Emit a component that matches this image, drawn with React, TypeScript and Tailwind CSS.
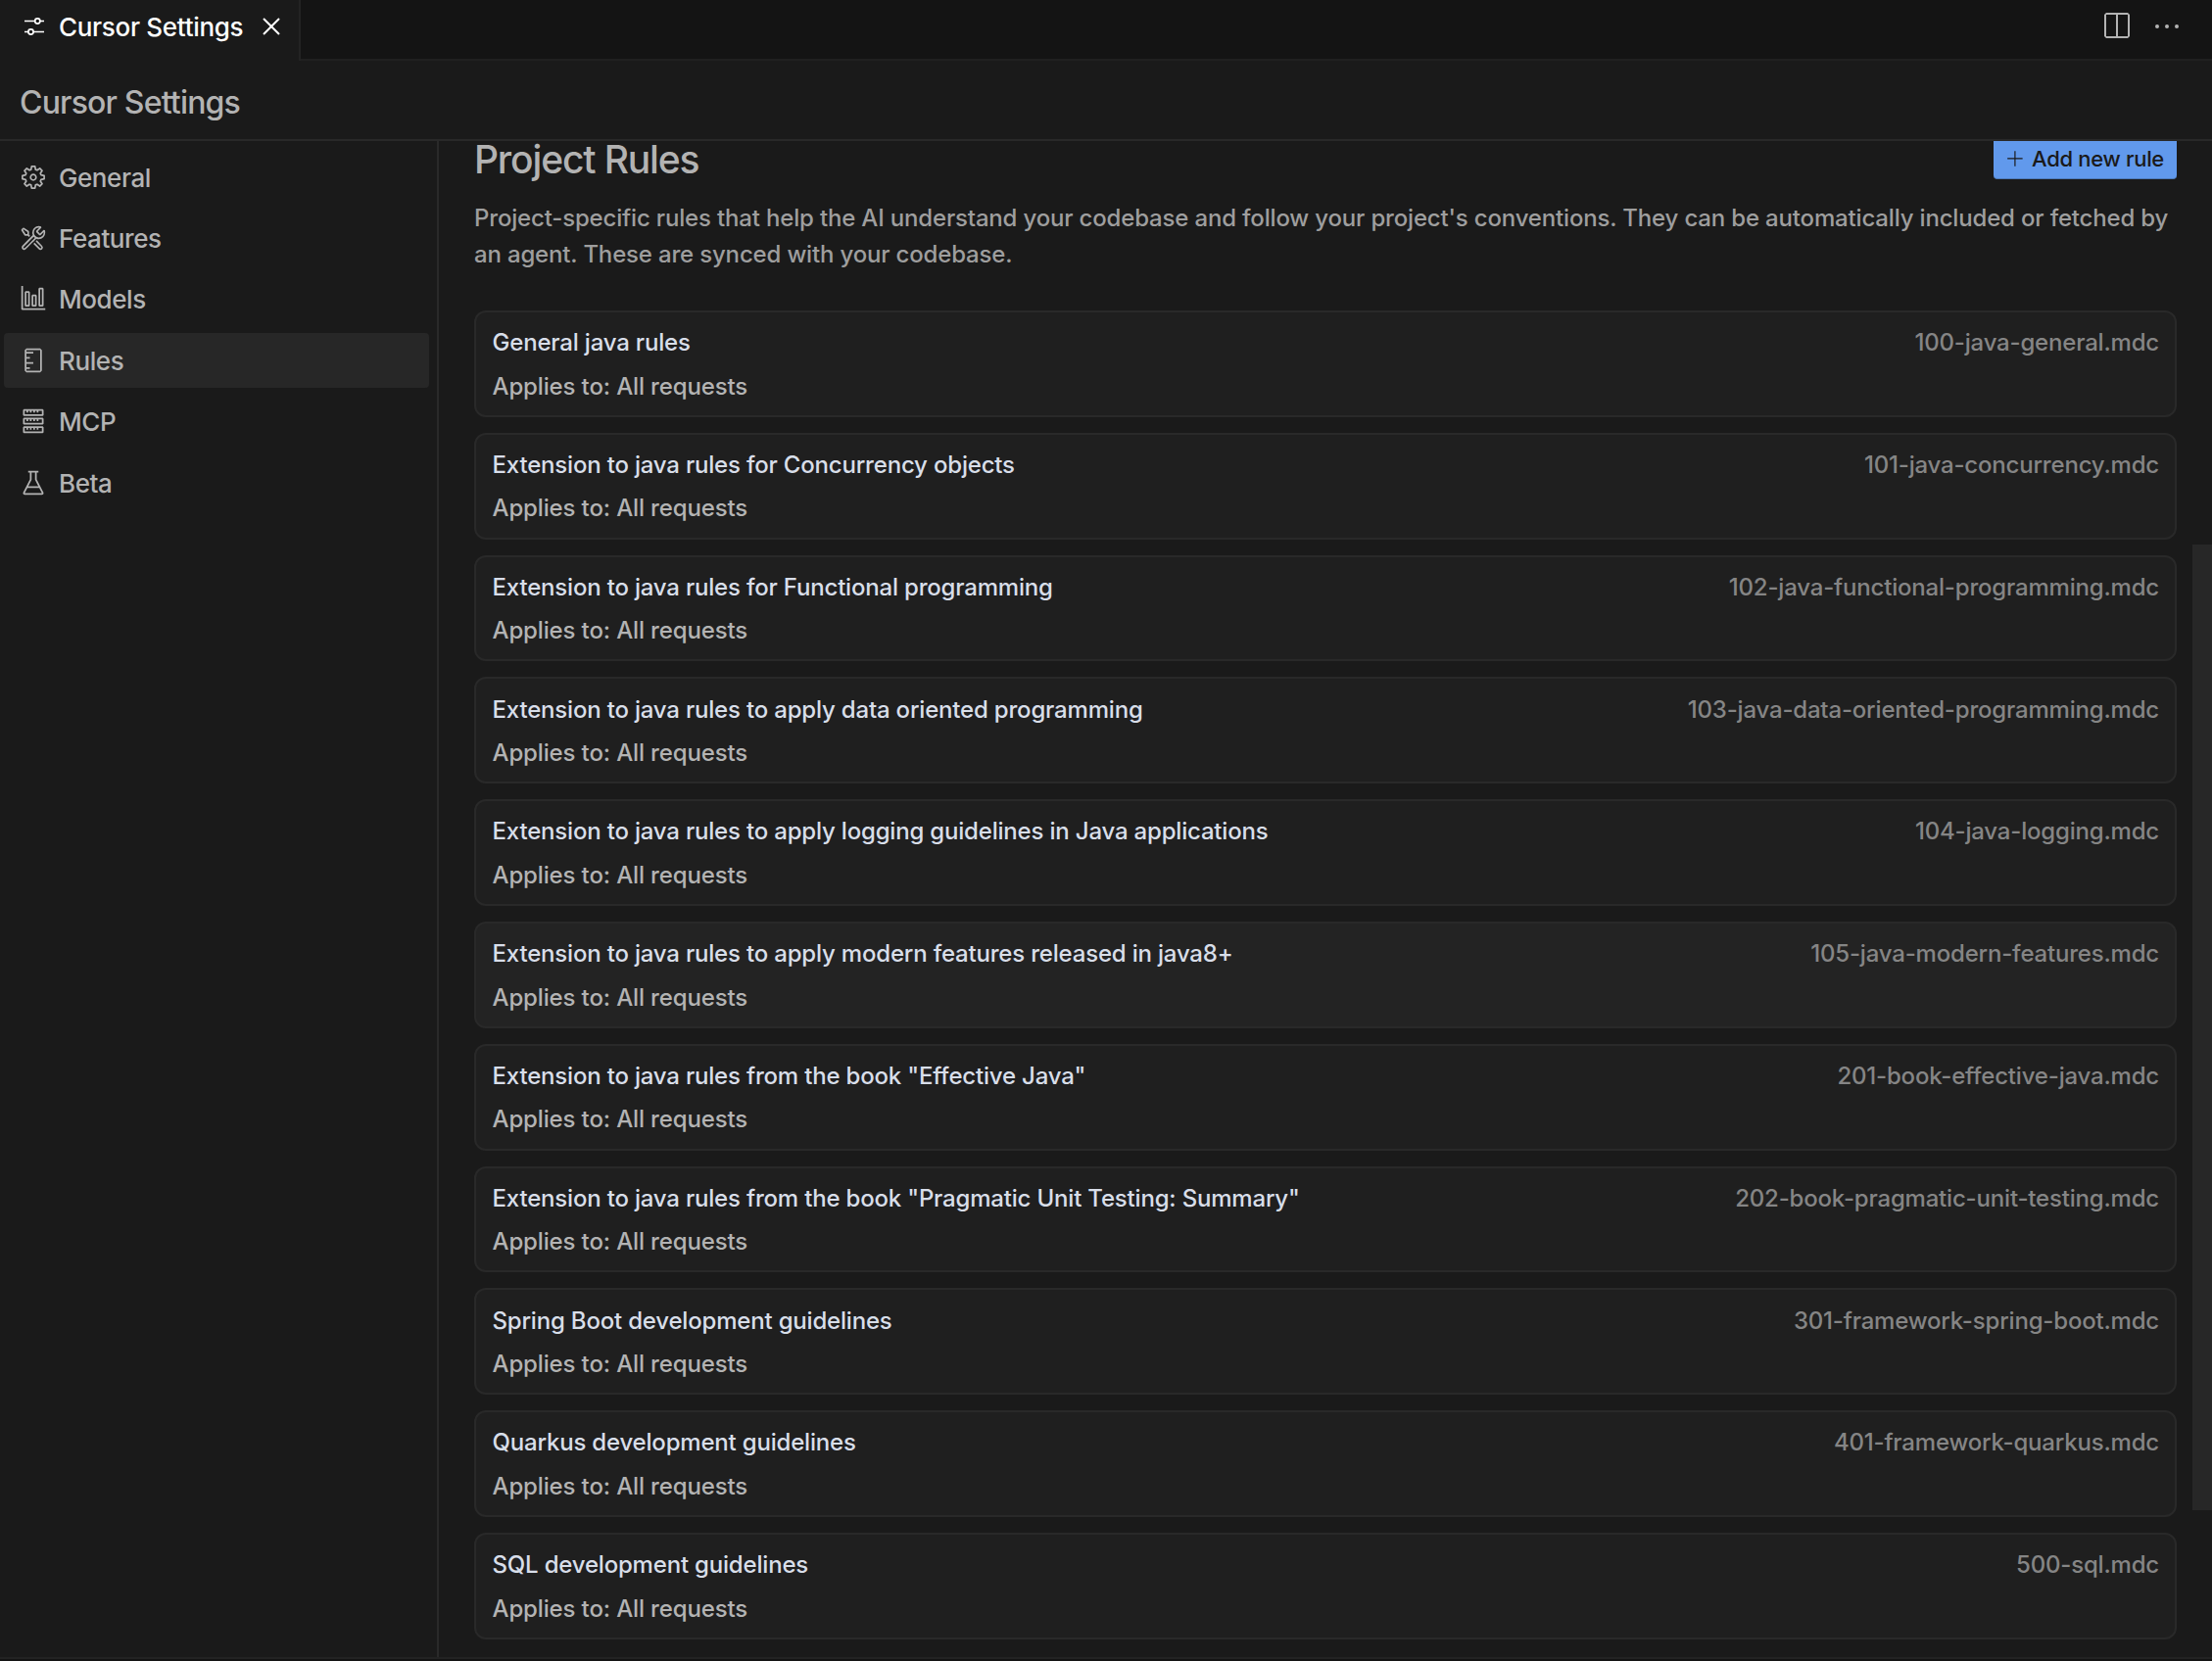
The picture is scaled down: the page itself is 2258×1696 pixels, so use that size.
import React from "react";
import {
  VscAdd,
  VscBeaker,
  VscClose,
  VscEllipsis,
  VscGraph,
  VscServer,
  VscSplitHorizontal,
  VscSymbolRuler,
  VscTools,
} from "react-icons/vsc";

function GearIcon({ className }: { className?: string }) {
  return (
    <svg viewBox="-14 -14 28 28" fill="none" stroke="currentColor" strokeWidth="1.7" strokeLinejoin="round" className={className}>
      <path d="M-2.3-7.9L-1.7-11.1L1.7-11.1L2.3-7.9L3.96-7.21L6.65-9.05L9.05-6.65L7.21-3.96L7.9-2.3L11.1-1.7L11.1 1.7L7.9 2.3L7.21 3.96L9.05 6.65L6.65 9.05L3.96 7.21L2.3 7.9L1.7 11.1L-1.7 11.1L-2.3 7.9L-3.96 7.21L-6.65 9.05L-9.05 6.65L-7.21 3.96L-7.9 2.3L-11.1 1.7L-11.1-1.7L-7.9-2.3L-7.21-3.96L-9.05-6.65L-6.65-9.05L-3.96-7.21Z" />
      <circle r="2.8" />
    </svg>
  );
}

const navItems = [
  { label: "General", Icon: GearIcon },
  { label: "Features", Icon: VscTools },
  { label: "Models", Icon: VscGraph },
  { label: "Rules", Icon: VscSymbolRuler, active: true },
  { label: "MCP", Icon: VscServer },
  { label: "Beta", Icon: VscBeaker },
];

const rules = [
  { title: "General java rules", file: "100-java-general.mdc" },
  { title: "Extension to java rules for Concurrency objects", file: "101-java-concurrency.mdc" },
  { title: "Extension to java rules for Functional programming", file: "102-java-functional-programming.mdc" },
  { title: "Extension to java rules to apply data oriented programming", file: "103-java-data-oriented-programming.mdc" },
  { title: "Extension to java rules to apply logging guidelines in Java applications", file: "104-java-logging.mdc" },
  { title: "Extension to java rules to apply modern features released in java8+", file: "105-java-modern-features.mdc", hovered: true },
  { title: 'Extension to java rules from the book "Effective Java"', file: "201-book-effective-java.mdc" },
  { title: 'Extension to java rules from the book "Pragmatic Unit Testing: Summary"', file: "202-book-pragmatic-unit-testing.mdc" },
  { title: "Spring Boot development guidelines", file: "301-framework-spring-boot.mdc" },
  { title: "Quarkus development guidelines", file: "401-framework-quarkus.mdc" },
  { title: "SQL development guidelines", file: "500-sql.mdc" },
];

function SlidersIcon({ className }: { className?: string }) {
  return (
    <svg viewBox="0 0 20 18" fill="none" stroke="currentColor" strokeWidth="1.7" className={className}>
      <path d="M0 3.5h10.6M16 3.5h4M0 14.5h3.8M9.2 14.5H20" />
      <circle cx="13.3" cy="3.5" r="2.6" />
      <circle cx="6.5" cy="14.5" r="2.6" />
    </svg>
  );
}

function TabBar() {
  return (
    <div className="flex h-[62px] shrink-0 bg-[#141414]">
      <div className="flex w-[307px] items-start border-r-2 border-[#232323] bg-[#1a1a1a] pl-[25px]">
        <SlidersIcon className="mt-[18px] h-[18px] w-5 text-white" />
        <span className="ml-[15px] mt-[8px] w-[188px] whitespace-nowrap text-[26px] leading-10 tracking-[-0.3px] text-white">
          Cursor Settings
        </span>
        <VscClose className="ml-[13px] mt-[11px] size-8 text-white" />
      </div>
      <div className="flex flex-1 items-start justify-end border-b-2 border-[#202020] pr-[30px]">
        <VscSplitHorizontal className="mt-[11px] size-8 text-[#b3b3b3]" />
        <VscEllipsis className="ml-5 mt-[11px] size-8 text-[#b3b3b3]" />
      </div>
    </div>
  );
}

function Sidebar() {
  return (
    <nav className="flex w-[448px] shrink-0 flex-col gap-[6.4px] border-r-2 border-[#292929] pl-1 pr-2 pt-[8.8px]">
      {navItems.map(({ label, Icon, active }) => (
        <div
          key={label}
          className={`flex h-14 items-center rounded pl-4 text-[26px] tracking-[-0.42px] text-[#b3b3b3] ${active ? "bg-[#272727]" : ""}`}
        >
          <Icon className="size-7" />
          <span className="ml-3 mt-[0.6px]">{label}</span>
        </div>
      ))}
    </nav>
  );
}

function RuleCard({ title, file, hovered }: { title: string; file: string; hovered?: boolean }) {
  return (
    <div
      className={`flex h-[108.8px] shrink-0 flex-col gap-[8.4px] rounded-xl border-2 border-[#292929] pl-[16.5px] pr-4 pt-[13.2px] text-[24px] leading-9 ${hovered ? "bg-[#232323]" : "bg-[#1f1f1f]"}`}
    >
      <div className="flex justify-between">
        <span className="tracking-[-0.19px] text-[#d8dee9]">{title}</span>
        <span className="tracking-[-0.19px] text-[#858585]">{file}</span>
      </div>
      <div className="tracking-[-0.14px] text-[#b3b3b3]">Applies to: All requests</div>
    </div>
  );
}

export default function App() {
  return (
    <div className="flex h-[1696px] w-[2258px] flex-col overflow-hidden bg-[#1a1a1a] font-['Inter',sans-serif] font-[450]">
      <TabBar />
      <header className="h-[82px] shrink-0 border-b-2 border-[#292929] pl-5 pt-[22px] text-[32px] leading-[42px] tracking-[-0.82px] text-[#b3b3b3]">
        Cursor Settings
      </header>
      <div className="flex min-h-0 flex-1">
        <Sidebar />
        <main className="flex min-w-0 flex-1 flex-col pl-9">
          <div className="flex h-[39px] shrink-0 items-start justify-between pr-4">
            <h1 className="text-[39px] leading-[38px] tracking-[-1.15px] text-[#b3b3b3]">Project Rules</h1>
            <button className="flex h-[39px] w-[187px] items-center rounded-b border-b border-[#4d7ab8] bg-[#6199ec] pb-px pl-[13px] text-[22px] tracking-[-0.3px] text-[#1a1a1a]">
              <VscAdd className="size-[19px] shrink-0" />
              <span className="mb-px ml-[7px] whitespace-nowrap">Add new rule</span>
            </button>
          </div>
          <p className="mt-[21px] whitespace-nowrap text-[24px] leading-[37px] tracking-[-0.172px] text-[#9e9e9e]">
            Project-specific rules that help the AI understand your codebase and follow your project's conventions. They can be automatically included or fetched by
            <br />
            an agent. These are synced with your codebase.
          </p>
          <div className="mt-[39px] flex flex-col gap-4 pr-4">
            {rules.map((rule) => (
              <RuleCard key={rule.file} {...rule} />
            ))}
          </div>
        </main>
        <div className="w-5 shrink-0 pt-[412px]">
          <div className="h-[986px] bg-[#272727]" />
        </div>
      </div>
      <footer className="h-1 shrink-0 border-t-2 border-[#232323] bg-[#141414]" />
    </div>
  );
}
